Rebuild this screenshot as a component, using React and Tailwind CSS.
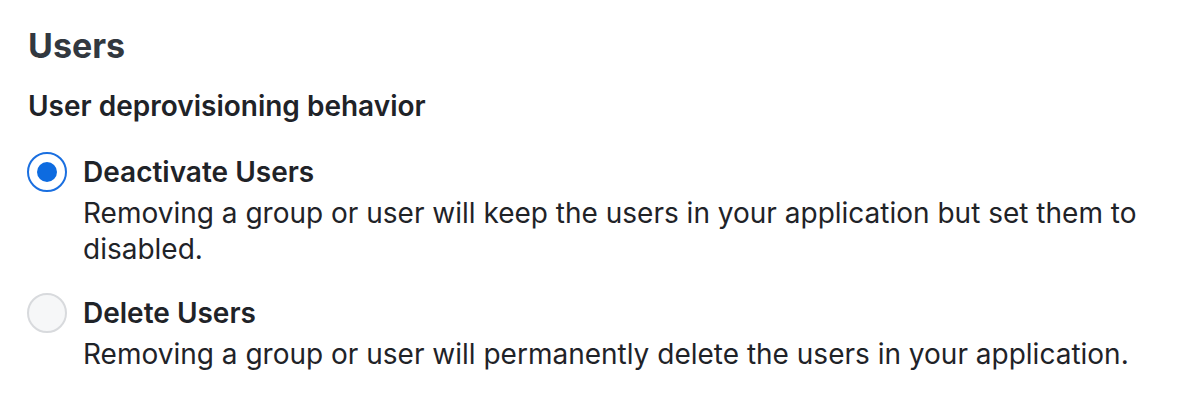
export default function App() {
  const font = { fontFamily: 'Inter, "Noto Sans", sans-serif' };
  return (
    <div className="w-[1200px] h-[400px] bg-white text-[#1f2328] pl-[27px] pt-[24px]" style={font}>
      <h2 className="pl-[1px] text-[34px] leading-[44px] font-bold text-[#32383f]">Users</h2>
      <h3 className="pl-[1px] mt-[20px] text-[28px] leading-[36px] font-semibold">User deprovisioning behavior</h3>
      <div className="mt-[28px] flex flex-col gap-[26px]">
        <label className="flex items-start gap-[16px]">
          <span className="w-[40px] h-[40px] rounded-full border-2 border-[#1a6fe0] bg-white flex items-center justify-center shrink-0">
            <span className="w-[20px] h-[20px] rounded-full bg-[#0d6be0]"></span>
          </span>
          <span className="flex flex-col">
            <span className="text-[28px] leading-[40px] font-semibold">Deactivate Users</span>
            <span className="mt-[3px] text-[28px] leading-[36px] text-[#1f2328] w-[1090px]">Removing a group or user will keep the users in your application but set them to disabled.</span>
          </span>
        </label>
        <label className="flex items-start gap-[16px]">
          <span className="w-[40px] h-[40px] rounded-full border-2 border-[#d8dadd] bg-[#f6f7f8] shrink-0"></span>
          <span className="flex flex-col">
            <span className="text-[28px] leading-[40px] font-semibold">Delete Users</span>
            <span className="mt-[3px] text-[28px] leading-[36px] text-[#1f2328]">Removing a group or user will permanently delete the users in your application.</span>
          </span>
        </label>
      </div>
    </div>
  );
}
